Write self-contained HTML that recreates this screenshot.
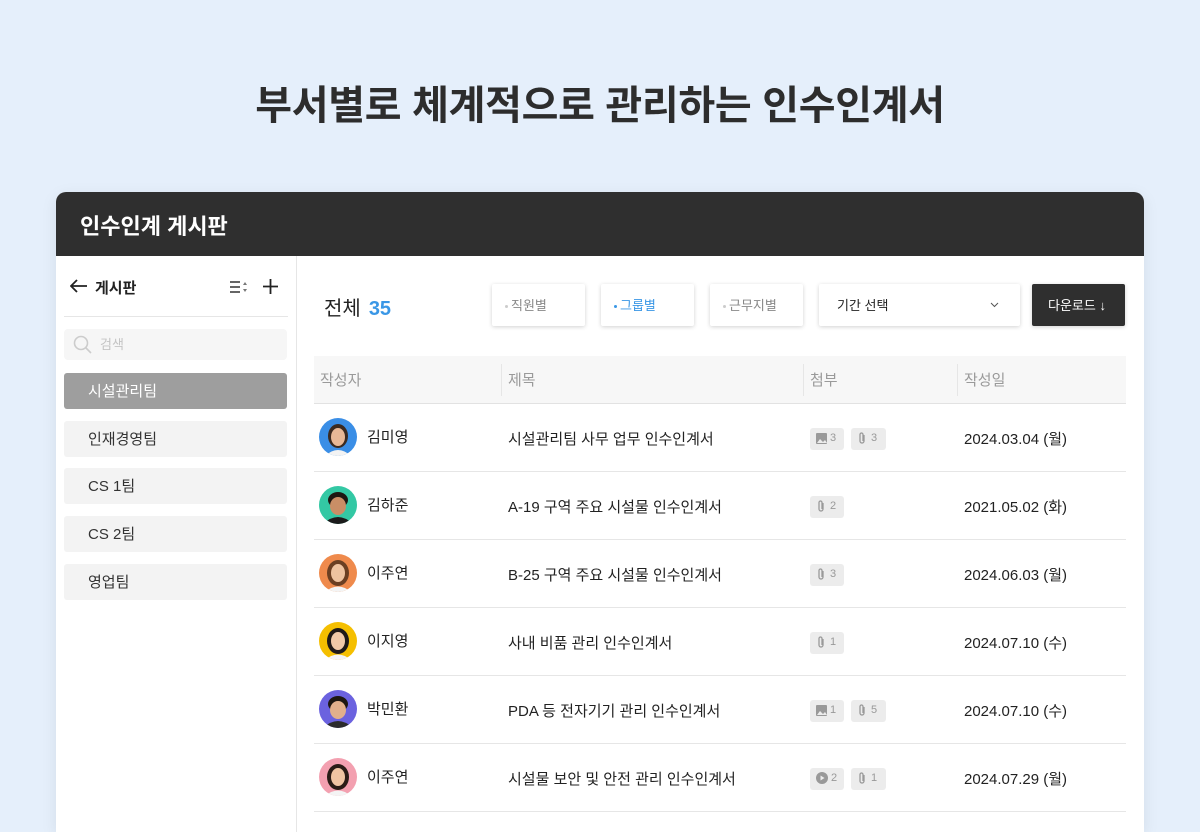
<!DOCTYPE html>
<html><head><meta charset="utf-8"><style>
*{box-sizing:border-box;margin:0;padding:0}
body{width:1200px;height:820px;overflow:hidden;background:#e5effb;font-family:"Liberation Sans","Noto Sans CJK KR",sans-serif;position:relative;color:#222}
h1{position:absolute;top:73px;left:0;width:1200px;text-align:center;font-size:40px;font-weight:700;color:#2d2d2d;letter-spacing:-0.3px}
.card{position:absolute;left:56px;top:192px;width:1088px;height:640px;background:#fff;border-radius:10px 10px 0 0;overflow:hidden;box-shadow:0 4px 16px rgba(0,0,0,.08)}
.hd{height:64px;background:#2f2f2f;color:#fff;font-size:22px;font-weight:700;padding:17px 0 0 24px}
.side{position:absolute;left:0;top:64px;width:241px;bottom:0;border-right:1px solid #e6e6e6}
.stop{position:absolute;left:8px;right:8px;top:0;height:61px;border-bottom:1px solid #e6e6e6;font-size:15px;font-weight:700}
.search{position:absolute;left:8px;top:73px;width:223px;height:31px;background:#f6f6f6;border-radius:4px;color:#c4c4c4;font-size:13px;padding:5px 0 0 36px}
.item{position:absolute;left:8px;width:223px;height:36px;background:#f3f3f3;border-radius:3px;font-size:15px;color:#333;padding:7px 0 0 24px}
.item.on{background:#9e9e9e;color:#fff}
.total{position:absolute;left:268px;top:100px;font-size:20px;color:#222}
.total b{color:#3a97e6;margin-left:8px}
.chip{position:absolute;top:92px;height:42px;background:#fff;border-radius:2px;box-shadow:0 1px 4px rgba(0,0,0,.18);font-size:13px;color:#888;padding:11px 0 0 13px}
.chip i{display:inline-block;width:3px;height:3px;border-radius:50%;background:#ccc;vertical-align:middle;margin-right:3px}
.th{position:absolute;left:258px;top:164px;width:812px;height:48px;background:#f7f7f7;border-bottom:1px solid #e2e2e2;font-size:15px;color:#9a9a9a}
.th span{position:absolute;top:13px}
.th em{position:absolute;top:8px;width:1px;height:32px;background:#e6e6e6}
.row{position:absolute;left:258px;width:812px;height:68px;border-bottom:1px solid #e6e6e6;font-size:15px;color:#222}
.row>span{position:absolute}
.av{position:absolute;left:5px;top:14px;width:38px;height:38px;border-radius:50%;overflow:hidden}
.bd{position:absolute;top:24px;height:22px;border-radius:3px;background:#ececec;font-size:11px;color:#999;padding:4px 0 0 6px}
.bd svg{vertical-align:-3px;margin-right:3px}
</style></head><body>
<h1>부서별로 체계적으로 관리하는 인수인계서</h1>
<div class="card">
<div class="hd">인수인계 게시판</div>
<div class="side">
 <div class="stop">
  <svg style="position:absolute;left:6px;top:23px" width="18" height="14" viewBox="0 0 18 14"><path d="M17 7H2M7 1L1 7l6 6" stroke="#222" stroke-width="1.8" fill="none"/></svg>
  <span style="position:absolute;left:31px;top:21px">게시판</span>
  <svg style="position:absolute;left:166px;top:24px" width="20" height="14" viewBox="0 0 20 14"><path d="M0 2h10M0 7h10M0 12h10" stroke="#333" stroke-width="1.6"/><path d="M13 5l2-3 2 3zM13 9l2 3 2-3z" fill="#777"/></svg>
  <svg style="position:absolute;left:199px;top:23px" width="15" height="15" viewBox="0 0 15 15"><path d="M7.5 0v15M0 7.5h15" stroke="#222" stroke-width="1.8"/></svg>
 </div>
 <div class="search"><svg style="position:absolute;left:9px;top:6px" width="20" height="20" viewBox="0 0 20 20"><circle cx="8" cy="8" r="6.5" stroke="#ccc" stroke-width="1.6" fill="none"/><path d="M13 13l5 5" stroke="#ccc" stroke-width="1.6"/></svg>검색</div>
 <div class="item on" style="top:117px">시설관리팀</div>
 <div class="item" style="top:165px">인재경영팀</div>
 <div class="item" style="top:212px">CS 1팀</div>
 <div class="item" style="top:260px">CS 2팀</div>
 <div class="item" style="top:308px">영업팀</div>
</div>
<div class="total">전체<b>35</b></div>
<div class="chip" style="left:436px;width:93px"><i></i>직원별</div>
<div class="chip" style="left:545px;width:93px;color:#3a97e6"><i style="background:#3a97e6"></i>그룹별</div>
<div class="chip" style="left:654px;width:93px"><i></i>근무지별</div>
<div class="chip" style="left:763px;width:201px;color:#222;padding-left:18px">기간 선택<svg style="position:absolute;right:21px;top:18px" width="9" height="6" viewBox="0 0 9 6"><path d="M1 1l3.5 3.5L8 1" stroke="#555" fill="none"/></svg></div>
<div class="chip" style="left:976px;width:93px;background:#2f2f2f;color:#fff;padding-left:16px">다운로드 ↓</div>
<div class="th"><span style="left:6px">작성자</span><em style="left:187px"></em><span style="left:194px">제목</span><em style="left:489px"></em><span style="left:496px">첨부</span><em style="left:643px"></em><span style="left:650px">작성일</span></div>

<div class="row" style="top:212px"><div class="av" style="background:#3a8ee6"><svg width="38" height="38"><ellipse cx="19" cy="18" rx="10" ry="12" fill="#3b2a20"/><ellipse cx="19" cy="19" rx="7" ry="9" fill="#e8b896"/><path d="M6 38q13-12 26 0" fill="#f3f3f3"/></svg></div><span style="left:53px;top:22px">김미영</span><span style="left:194px;top:24px">시설관리팀 사무 업무 인수인계서</span><div class="bd" style="left:496px;width:34px"><svg width="11" height="11"><rect width="11" height="11" rx="1" fill="#999"/><path d="M1 10l3-4 3 3 2-2 2 3z" fill="#ececec"/></svg>3</div><div class="bd" style="left:537px;width:35px"><svg width="11" height="12" viewBox="0 0 11 12"><path d="M7 3v6a2 2 0 01-4 0V2.5a1.5 1.5 0 013 0V9" stroke="#999" fill="none" stroke-width="1.3"/></svg>3</div><span style="left:650px;top:24px">2024.03.04 (월)</span></div>

<div class="row" style="top:280px"><div class="av" style="background:#33c8a4"><svg width="38" height="38"><ellipse cx="19" cy="14" rx="10" ry="8" fill="#1d1712"/><ellipse cx="19" cy="20" rx="8" ry="9" fill="#c98e66"/><path d="M4 38q15-14 30 0" fill="#1b1b1b"/></svg></div><span style="left:53px;top:22px">김하준</span><span style="left:194px;top:24px">A-19 구역 주요 시설물 인수인계서</span><div class="bd" style="left:496px;width:34px"><svg width="11" height="12" viewBox="0 0 11 12"><path d="M7 3v6a2 2 0 01-4 0V2.5a1.5 1.5 0 013 0V9" stroke="#999" fill="none" stroke-width="1.3"/></svg>2</div><span style="left:650px;top:24px">2021.05.02 (화)</span></div>

<div class="row" style="top:348px"><div class="av" style="background:#ef8a4c"><svg width="38" height="38"><ellipse cx="19" cy="19" rx="11" ry="13" fill="#6b3f22"/><ellipse cx="19" cy="19" rx="7" ry="9" fill="#eec3a0"/><path d="M6 38q13-11 26 0" fill="#f4f4f4"/></svg></div><span style="left:53px;top:22px">이주연</span><span style="left:194px;top:24px">B-25 구역 주요 시설물 인수인계서</span><div class="bd" style="left:496px;width:34px"><svg width="11" height="12" viewBox="0 0 11 12"><path d="M7 3v6a2 2 0 01-4 0V2.5a1.5 1.5 0 013 0V9" stroke="#999" fill="none" stroke-width="1.3"/></svg>3</div><span style="left:650px;top:24px">2024.06.03 (월)</span></div>

<div class="row" style="top:416px"><div class="av" style="background:#f5bf00"><svg width="38" height="38"><ellipse cx="19" cy="19" rx="11" ry="13" fill="#1f1a18"/><ellipse cx="19" cy="19" rx="7" ry="9" fill="#f0c9a8"/><path d="M6 38q13-11 26 0" fill="#f4f4f4"/></svg></div><span style="left:53px;top:22px">이지영</span><span style="left:194px;top:24px">사내 비품 관리 인수인계서</span><div class="bd" style="left:496px;width:34px"><svg width="11" height="12" viewBox="0 0 11 12"><path d="M7 3v6a2 2 0 01-4 0V2.5a1.5 1.5 0 013 0V9" stroke="#999" fill="none" stroke-width="1.3"/></svg>1</div><span style="left:650px;top:24px">2024.07.10 (수)</span></div>

<div class="row" style="top:484px"><div class="av" style="background:#6b62df"><svg width="38" height="38"><ellipse cx="19" cy="14" rx="10" ry="8" fill="#1d1712"/><ellipse cx="19" cy="20" rx="8" ry="9" fill="#e2b08c"/><path d="M4 38q15-14 30 0" fill="#2b2b2b"/></svg></div><span style="left:53px;top:22px">박민환</span><span style="left:194px;top:24px">PDA 등 전자기기 관리 인수인계서</span><div class="bd" style="left:496px;width:34px"><svg width="11" height="11"><rect width="11" height="11" rx="1" fill="#999"/><path d="M1 10l3-4 3 3 2-2 2 3z" fill="#ececec"/></svg>1</div><div class="bd" style="left:537px;width:35px"><svg width="11" height="12" viewBox="0 0 11 12"><path d="M7 3v6a2 2 0 01-4 0V2.5a1.5 1.5 0 013 0V9" stroke="#999" fill="none" stroke-width="1.3"/></svg>5</div><span style="left:650px;top:24px">2024.07.10 (수)</span></div>

<div class="row" style="top:552px"><div class="av" style="background:#f3a0b0"><svg width="38" height="38"><ellipse cx="19" cy="19" rx="11" ry="13" fill="#2a1c16"/><ellipse cx="19" cy="19" rx="7" ry="9" fill="#efc4a2"/><path d="M6 38q13-11 26 0" fill="#f4f4f4"/></svg></div><span style="left:53px;top:22px">이주연</span><span style="left:194px;top:24px">시설물 보안 및 안전 관리 인수인계서</span><div class="bd" style="left:496px;width:34px"><svg width="12" height="12"><circle cx="6" cy="6" r="6" fill="#999"/><path d="M4.5 3.5v5l4-2.5z" fill="#ececec"/></svg>2</div><div class="bd" style="left:537px;width:35px"><svg width="11" height="12" viewBox="0 0 11 12"><path d="M7 3v6a2 2 0 01-4 0V2.5a1.5 1.5 0 013 0V9" stroke="#999" fill="none" stroke-width="1.3"/></svg>1</div><span style="left:650px;top:24px">2024.07.29 (월)</span></div>
</div>
</body></html>
